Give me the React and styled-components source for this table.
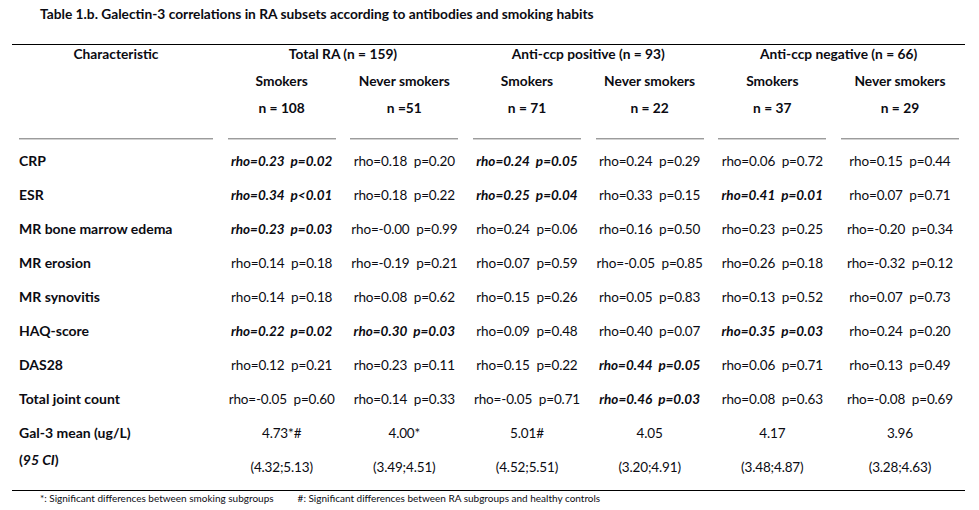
import React from 'react';
import styled, { createGlobalStyle } from 'styled-components';

// ==================== DADOS ====================
const groups = [
  { title: 'Total RA (n = 159)', subs: [['Smokers', 'n = 108'], ['Never smokers', 'n =51']] },
  { title: 'Anti-ccp positive (n = 93)', subs: [['Smokers', 'n = 71'], ['Never smokers', 'n = 22']] },
  { title: 'Anti-ccp negative (n = 66)', subs: [['Smokers', 'n = 37'], ['Never smokers', 'n = 29']] },
];

// "!" no início marca um valor significativo (negrito itálico)
const rows = [
  ['CRP', ['!rho=0.23  p=0.02', 'rho=0.18  p=0.20', '!rho=0.24  p=0.05', 'rho=0.24  p=0.29', 'rho=0.06  p=0.72', 'rho=0.15  p=0.44']],
  ['ESR', ['!rho=0.34  p<0.01', 'rho=0.18  p=0.22', '!rho=0.25  p=0.04', 'rho=0.33  p=0.15', '!rho=0.41  p=0.01', 'rho=0.07  p=0.71']],
  ['MR bone marrow edema', ['!rho=0.23  p=0.03', 'rho=-0.00  p=0.99', 'rho=0.24  p=0.06', 'rho=0.16  p=0.50', 'rho=0.23  p=0.25', 'rho=-0.20  p=0.34']],
  ['MR erosion', ['rho=0.14  p=0.18', 'rho=-0.19  p=0.21', 'rho=0.07  p=0.59', 'rho=-0.05  p=0.85', 'rho=0.26  p=0.18', 'rho=-0.32  p=0.12']],
  ['MR synovitis', ['rho=0.14  p=0.18', 'rho=0.08  p=0.62', 'rho=0.15  p=0.26', 'rho=0.05  p=0.83', 'rho=0.13  p=0.52', 'rho=0.07  p=0.73']],
  ['HAQ-score', ['!rho=0.22  p=0.02', '!rho=0.30  p=0.03', 'rho=0.09  p=0.48', 'rho=0.40  p=0.07', '!rho=0.35  p=0.03', 'rho=0.24  p=0.20']],
  ['DAS28', ['rho=0.12  p=0.21', 'rho=0.23  p=0.11', 'rho=0.15  p=0.22', '!rho=0.44  p=0.05', 'rho=0.06  p=0.71', 'rho=0.13  p=0.49']],
  ['Total joint count', ['rho=-0.05  p=0.60', 'rho=0.14  p=0.33', 'rho=-0.05  p=0.71', '!rho=0.46  p=0.03', 'rho=0.08  p=0.63', 'rho=-0.08  p=0.69']],
  ['Gal-3 mean (ug/L)', ['4.73*#', '4.00*', '5.01#', '4.05', '4.17', '3.96']],
];

const ci = ['(4.32;5.13)', '(3.49;4.51)', '(4.52;5.51)', '(3.20;4.91)', '(3.48;4.87)', '(3.28;4.63)'];

const COLUMNS = '194px repeat(5, 108px) 118px';

// ==================== ESTILOS ====================
const GlobalStyle = createGlobalStyle`
  html, body {
    margin: 0;
    padding: 0;
    background: #fff;
  }
  body {
    font-family: Lato, "Open Sans", sans-serif;
    color: #0b0b12;
  }
`;

const Page = styled.div`
  width: 979px;
  height: 510px;
  padding-left: 12px;
  box-sizing: border-box;
  overflow: hidden;
`;

const Title = styled.h1`
  margin: 0 0 16px 28px;
  font-size: 13.75px;
  font-weight: 700;
  line-height: 28px;
`;

const TableBox = styled.div`
  width: 953px;
  border-top: 1px solid #000;
  border-bottom: 1px solid #000;
  padding: 0 0 13px 7px;
  box-sizing: border-box;
`;

const HeadGrid = styled.div`
  display: grid;
  grid-template-columns: ${COLUMNS};
  column-gap: 14.67px;
  font-weight: 700;
  font-size: 13.75px;
`;

const Ruled = styled.div`
  border-bottom: 1px solid #9c9c9c;
  box-shadow: 0 1px 0 #d2d2d2;
`;

const CharHead = styled(Ruled)`
  grid-row: span 2;
  text-align: center;
  line-height: 17px;
`;

const GroupHead = styled.div`
  grid-column: span 2;
  text-align: center;
  line-height: 17px;
  padding-bottom: 5px;
`;

const SubHead = styled(Ruled)`
  text-align: center;
  line-height: 27px;
  padding-bottom: 17px;
  white-space: pre;
`;

const BodyGrid = styled.div`
  display: grid;
  grid-template-columns: ${COLUMNS};
  column-gap: 14.67px;
  padding-top: 5px;
  font-size: 13.5px;
`;

const Label = styled.div`
  font-weight: 700;
  font-size: 14px;
  line-height: ${({ $h }) => $h || 34}px;
`;

const Value = styled.div`
  text-align: center;
  white-space: pre;
  line-height: ${({ $h }) => $h || 34}px;
  padding-top: ${({ $top }) => $top || 0}px;
  font-weight: ${({ $strong }) => ($strong ? 700 : 400)};
  font-style: ${({ $strong }) => ($strong ? 'italic' : 'normal')};
  letter-spacing: ${({ $strong }) => ($strong ? '0' : '-0.15px')};
`;

const Footnotes = styled.div`
  display: flex;
  gap: 24px;
  padding-left: 28px;
  font-size: 10px;
  line-height: 14px;
`;

// ==================== COMPONENTE ====================
const App = () => {
  return (
    <>
      <GlobalStyle />
      <Page>
        <Title>Table 1.b. Galectin-3 correlations in RA subsets according to antibodies and smoking habits</Title>

        <TableBox>
          <HeadGrid>
            <CharHead>Characteristic</CharHead>
            {groups.map((g) => (
              <GroupHead key={g.title}>{g.title}</GroupHead>
            ))}
            {groups.flatMap((g) =>
              g.subs.map(([name, n]) => (
                <SubHead key={g.title + name}>
                  {name}
                  {'\n'}
                  {n}
                </SubHead>
              ))
            )}
          </HeadGrid>

          <BodyGrid>
            {rows.map(([label, values]) => (
              <React.Fragment key={label}>
                <Label>{label}</Label>
                {values.map((v, i) => {
                  const strong = v.startsWith('!');
                  return (
                    <Value key={i} $strong={strong}>
                      {strong ? v.slice(1) : v}
                    </Value>
                  );
                })}
              </React.Fragment>
            ))}

            <Label $h={20}>
              (<i>95 CI</i>)
            </Label>
            {ci.map((v) => (
              <Value key={v} $h={20} $top={7}>
                {v}
              </Value>
            ))}
          </BodyGrid>
        </TableBox>

        <Footnotes>
          <span>*: Significant differences between smoking subgroups</span>
          <span>#: Significant differences between RA subgroups and healthy controls</span>
        </Footnotes>
      </Page>
    </>
  );
};

export default App;
